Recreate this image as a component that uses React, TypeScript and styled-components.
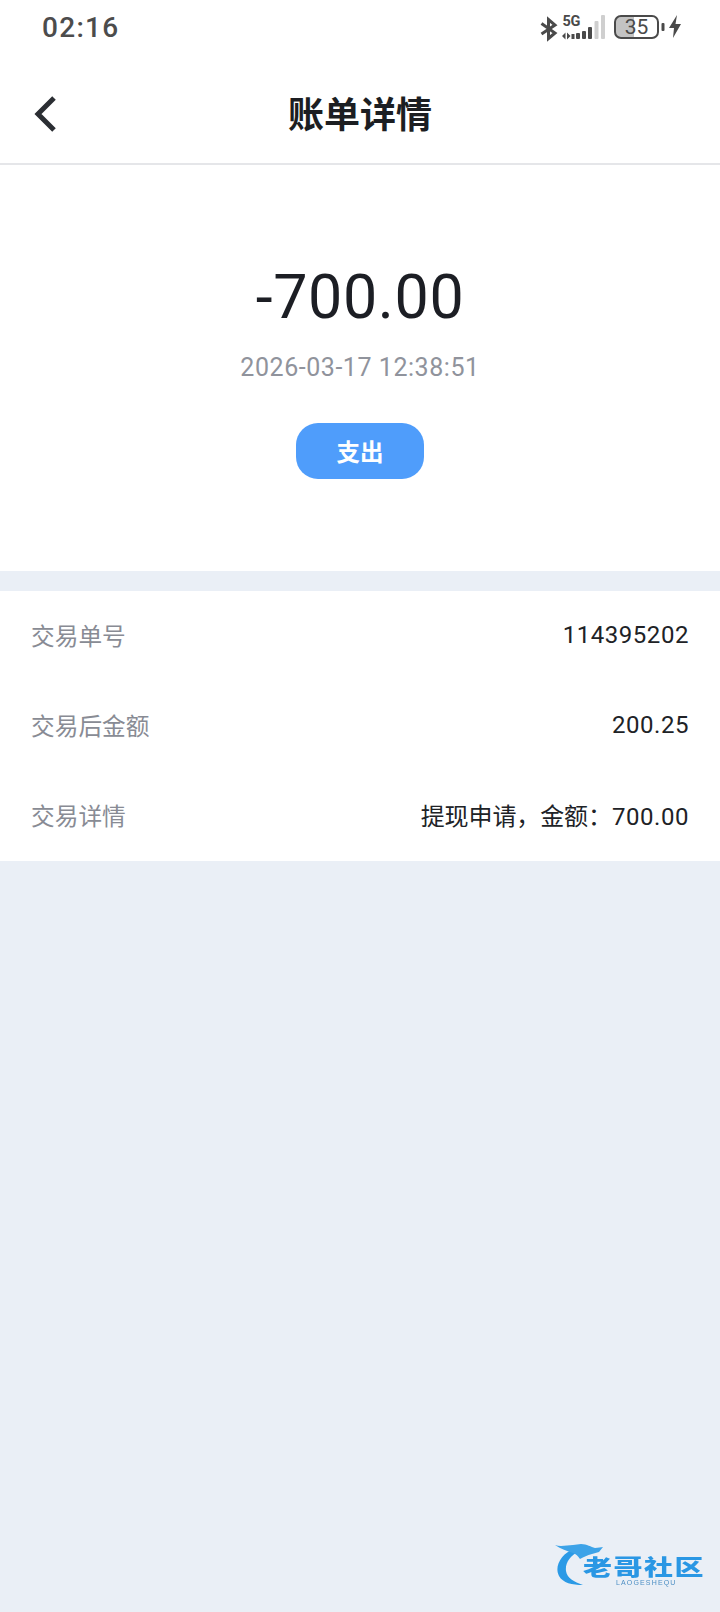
import React from "react";
import styled, { createGlobalStyle } from "styled-components";

const CJK = `Roboto, "Noto Sans CJK SC", sans-serif`;

const Global = createGlobalStyle`
  html, body { margin: 0; padding: 0; background: #eaeff6; }
  * { box-sizing: border-box; }
`;

const Page = styled.div`
  position: relative;
  width: 720px;
  height: 1612px;
  overflow: hidden;
  background: #eaeff6;
  font-family: ${CJK};
`;

const StatusBar = styled.div`
  height: 56px;
  background: #fff;
  display: flex;
  align-items: center;
  justify-content: space-between;
  padding: 0 38px 0 42px;
`;

const Clock = styled.span`
  font-size: 28px;
  font-weight: 500;
  line-height: 1;
  letter-spacing: 1.3px;
  color: #4c4c4c;
`;

const StatusIcons = styled.svg`
  display: block;
`;

const Header = styled.header`
  position: relative;
  height: 109px;
  background: #fff;
  border-bottom: 2px solid #e5e6e9;
  display: flex;
  align-items: center;
  justify-content: center;
`;

const BackIcon = styled.svg`
  position: absolute;
  left: 34px;
  top: 39px;
`;

const Title = styled.h1`
  margin: 13px 0 0;
  font-size: 36px;
  font-weight: 700;
  line-height: 1;
  color: #1c1e22;
`;

const Hero = styled.section`
  height: 406px;
  background: #fff;
  display: flex;
  flex-direction: column;
  align-items: center;
  padding-top: 92px;
`;

const Amount = styled.div`
  font-size: 61px;
  font-weight: 400;
  line-height: 80px;
  letter-spacing: 0.6px;
  color: #1c1e24;
`;

const DateText = styled.div`
  margin-top: 15px;
  font-size: 25px;
  line-height: 32px;
  letter-spacing: 0.55px;
  color: #90939c;
`;

const Pill = styled.div`
  margin-top: 39px;
  width: 128px;
  height: 56px;
  border-radius: 22px;
  background: #4f9dfb;
  color: #fff;
  font-size: 23.5px;
  font-weight: 700;
  display: flex;
  align-items: center;
  justify-content: center;
`;

const List = styled.section`
  margin-top: 20px;
  background: #fff;
`;

const Row = styled.div`
  height: 90px;
  padding: 0 31px 3px 31px;
  display: flex;
  align-items: center;
  justify-content: space-between;
  font-size: 24px;
`;

const Label = styled.span`
  color: #888b94;
  font-size: 23.7px;
`;

const Value = styled.span`
  color: #202226;
  letter-spacing: 0.55px;
`;

const ValuePrefix = styled.span`
  letter-spacing: -0.1px;
`;

const Watermark = styled.div`
  position: absolute;
  left: 555px;
  top: 1540px;
  width: 152px;
  height: 50px;
  filter: blur(0.6px);
`;

const Swoosh = styled.svg`
  position: absolute;
  left: 0;
  top: 0;
`;

const LogoName = styled.span`
  position: absolute;
  left: 28px;
  top: 17px;
  font-family: "Noto Sans CJK SC", sans-serif;
  font-size: 29px;
  font-weight: 900;
  line-height: 22px;
  letter-spacing: 1.5px;
  white-space: nowrap;
  color: #2a97e4;
  transform: scaleY(0.74);
  transform-origin: top left;
`;

const LogoSub = styled.span`
  position: absolute;
  left: 61px;
  top: 39px;
  font-family: "Liberation Sans", sans-serif;
  font-size: 7px;
  line-height: 8px;
  letter-spacing: 1.15px;
  white-space: nowrap;
  color: #4d8fc4;
`;

const rows = [
  { label: "交易单号", prefix: "", value: "114395202" },
  { label: "交易后金额", prefix: "", value: "200.25" },
  { label: "交易详情", prefix: "提现申请，金额：", value: "700.00" },
];

export default function App() {
  return (
    <Page>
      <Global />
      <StatusBar>
        <Clock>02:16</Clock>
        <StatusIcons width="142" height="30" viewBox="0 0 142 30" fill="none">
          <path d="M1.500 10.500 15 20l-6.500 5.500v-19L15 12 1.500 21" stroke="#4a4a4a" strokeWidth="3" />
          <text x="22.500" y="13" fontFamily="Roboto, sans-serif" fontSize="14.500" fontWeight="700" fill="#4a4a4a" letterSpacing="-0.3">5G</text>
          <path d="M25.500 19.500v7l-3.500-3.500zM27 19.500v7l3.500-3.500z" fill="#4a4a4a" />
          <rect x="31.500" y="21" width="3" height="5" fill="#4a4a4a" />
          <rect x="36" y="20" width="4" height="6" rx="1" fill="#4a4a4a" />
          <rect x="42" y="18" width="4" height="8" rx="1" fill="#4a4a4a" />
          <rect x="48" y="14" width="4" height="12" rx="1" fill="#4a4a4a" />
          <rect x="54.500" y="8" width="4" height="18" rx="1" fill="#cfcfcf" />
          <rect x="61" y="2" width="4" height="24" rx="1" fill="#cfcfcf" />
          <path d="M80 3h14v22H80a5 5 0 0 1-5-5V8a5 5 0 0 1 5-5z" fill="#c3c3c3" />
          <rect x="75" y="3" width="43" height="22" rx="6" stroke="#4a4a4a" strokeWidth="2" />
          <text x="96.500" y="21" textAnchor="middle" fontFamily="Roboto, sans-serif" fontSize="21" fill="#4a4a4a">35</text>
          <rect x="121.500" y="10" width="3" height="8" rx="1" fill="#4a4a4a" />
          <path d="M137 2 129 15h5l-1 10 8-14h-5.500l1.500-9z" fill="#4a4a4a" />
        </StatusIcons>
      </StatusBar>
      <Header>
        <BackIcon width="24" height="40" viewBox="0 0 24 40" fill="none">
          <path d="M20 3 4 19 20 35" stroke="#2b2e33" strokeWidth="5" />
        </BackIcon>
        <Title>账单详情</Title>
      </Header>
      <Hero>
        <Amount>-700.00</Amount>
        <DateText>2026-03-17 12:38:51</DateText>
        <Pill>支出</Pill>
      </Hero>
      <List>
        {rows.map((r) => (
          <Row key={r.label}>
            <Label>{r.label}</Label>
            <Value>
              {r.prefix && <ValuePrefix>{r.prefix}</ValuePrefix>}
              {r.value}
            </Value>
          </Row>
        ))}
      </List>
      <Watermark>
        <Swoosh width="60" height="50" viewBox="0 0 60 50" fill="none">
          <path d="M20 8C6 14 -1 26 4 36c4 7 13 9 24 9-9-3-16-7-17-14-1-8 4-15 13-20z" fill="#2b9ae6" />
          <path d="M0 5c6 2 12 0 18 0l8-1c6 0 10 3 14 4 3 0 6-1 8-1l-4 5-7 2c-5 1-8 3-12 5-2-3-4-5-7-6-6-2-12-4-18-8z" fill="#3da3e8" />
        </Swoosh>
        <LogoName>老哥社区</LogoName>
        <LogoSub>LAOGESHEQU</LogoSub>
      </Watermark>
    </Page>
  );
}
